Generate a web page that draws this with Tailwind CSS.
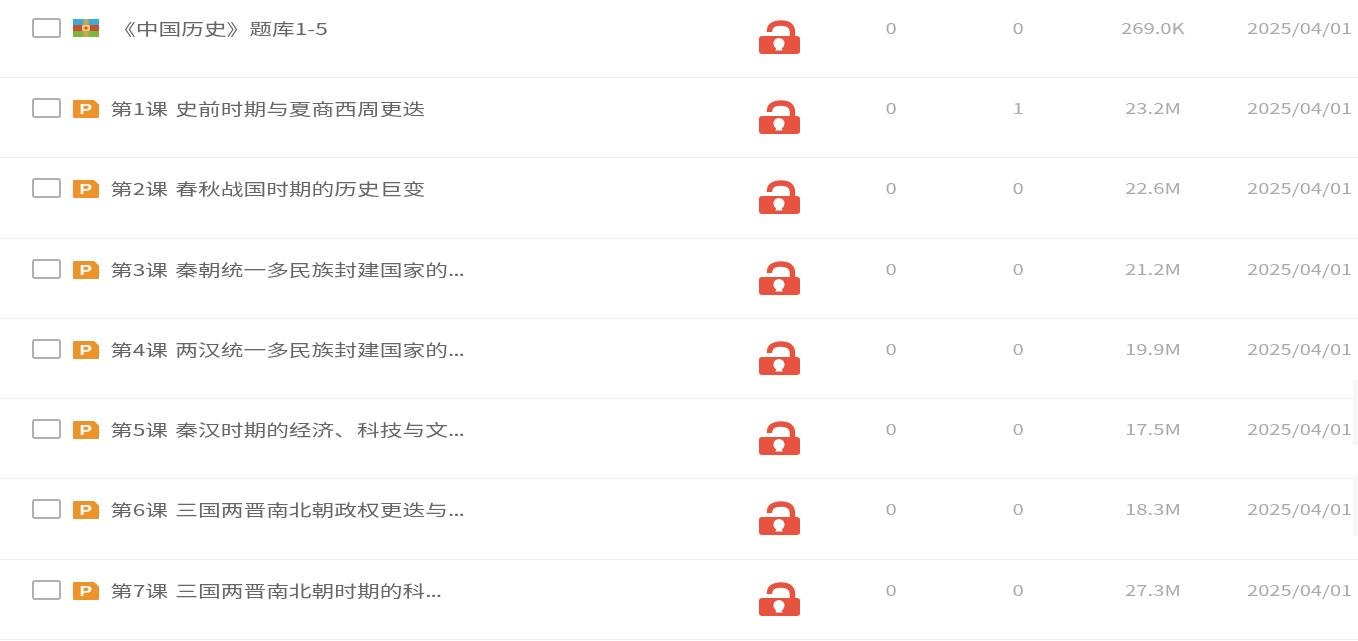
<!DOCTYPE html>
<html lang="zh-CN">
<head>
    <meta charset="UTF-8">
    <title>文件列表</title>
    <script src="https://cdn.jsdelivr.net/npm/@tailwindcss/browser@4"></script>
</head>
<body class="bg-white overflow-hidden h-[641px] relative font-['Noto_Sans_CJK_SC','Noto_Sans',sans-serif]">
    <div id="file-list" class="-mt-[2.25px] blur-[0.5px]"></div>

    <!-- 右侧露出的浮层边缘 -->
    <div class="absolute right-0 top-[380px] w-[5px] h-[65px] bg-[#f7f7f7]"></div>
    <div class="absolute right-0 top-[475px] w-[5px] h-[61px] bg-[#f7f7f7]"></div>

    <script>
        const files = [
            { name: "《中国历史》题库1-5", more: false, type: "rar", down: 0, view: 0, size: "269.0K" },
            { name: "第1课 史前时期与夏商西周更迭", more: false, type: "ppt", down: 0, view: 1, size: "23.2M" },
            { name: "第2课 春秋战国时期的历史巨变", more: false, type: "ppt", down: 0, view: 0, size: "22.6M" },
            { name: "第3课 秦朝统一多民族封建国家的", more: true, type: "ppt", down: 0, view: 0, size: "21.2M" },
            { name: "第4课 两汉统一多民族封建国家的", more: true, type: "ppt", down: 0, view: 0, size: "19.9M" },
            { name: "第5课 秦汉时期的经济、科技与文", more: true, type: "ppt", down: 0, view: 0, size: "17.5M" },
            { name: "第6课 三国两晋南北朝政权更迭与", more: true, type: "ppt", down: 0, view: 0, size: "18.3M" },
            { name: "第7课 三国两晋南北朝时期的科", more: true, type: "ppt", down: 0, view: 0, size: "27.3M" }
        ];

        const rarIcon = `<svg class="w-[26px] h-[18px] mt-[1px] ml-[12px] shrink-0" viewBox="0 0 26 18">
            <rect width="26" height="6" fill="#3fa9d8"/>
            <rect y="6" width="26" height="6" fill="#c8502c"/>
            <rect y="12" width="26" height="6" fill="#7cb63c"/>
            <rect x="10.5" width="5" height="18" fill="#c9a94f"/>
            <rect x="9" y="6" width="8" height="6" rx="1" fill="#f4c877"/>
            <circle cx="13" cy="9" r="1.6" fill="#c8502c"/>
        </svg>`;

        const pptIcon = `<svg class="w-[26px] h-[18px] mt-[2px] ml-[12px] shrink-0" viewBox="0 0 26 18">
            <path d="M1 0H21L26 4.5V17A1 1 0 0 1 25 18H1A1 1 0 0 1 0 17V1A1 1 0 0 1 1 0Z" fill="#ee9329"/>
            <text x="10.2" y="14.5" text-anchor="middle" transform="scale(1.25 1)" font-family="Liberation Sans" font-weight="700" font-size="15" fill="#fff">P</text>
        </svg>`;

        const lockIcon = `<svg class="w-[41px] h-[34px] mt-[2px] shrink-0" viewBox="0 0 41 34">
            <path d="M10.5 12V11C10.5 6 15 3 22 3S33.5 6 33.5 12V18" fill="none" stroke="#e8533f" stroke-width="5.5"/>
            <rect y="16" width="41" height="18" rx="3" fill="#e8533f"/>
            <circle cx="20" cy="23.5" r="5.5" fill="#fff"/>
            <path d="M18 25H22L23.5 30.5H16.5Z" fill="#fff"/>
        </svg>`;

        document.getElementById("file-list").innerHTML = files.map((file) => `
            <div class="flex items-start h-[80.25px] pt-[20px] pl-[32px] border-b border-[#ececec] text-[#aaaaaa] whitespace-nowrap">
                <span class="w-[29px] h-[20px] shrink-0 border-2 border-[#b0b0b0] rounded-[3px] bg-white"></span>
                ${file.type === "rar" ? rarIcon : pptIcon}
                <div class="w-[649px] ml-[11px] shrink-0 h-[22px] -mt-[1px] leading-[22px] ${file.type === "rar" ? "pl-[3px]" : "pl-0"}">
                    <span class="inline-block origin-left scale-x-[1.42] text-[16px] [word-spacing:1.5px] text-[#666666]">${file.name}${file.more ? '<span class="tracking-[-0.7px]">...</span>' : ""}</span>
                </div>
                ${lockIcon}
                <div class="w-[60px] ml-[61px] -mt-[1px] text-center h-[22px] leading-[22px] text-[14.5px]"><span class="inline-block scale-x-[1.4]">${file.down}</span></div>
                <div class="w-[60px] ml-[67px] -mt-[1px] text-center h-[22px] leading-[22px] text-[14.5px]"><span class="inline-block scale-x-[1.4]">${file.view}</span></div>
                <div class="w-[80px] ml-[65px] -mt-[1px] text-center h-[22px] leading-[22px] text-[14.5px]"><span class="inline-block scale-x-[1.4]">${file.size}</span></div>
                <div class="ml-[54px] -mt-[1px] h-[22px] leading-[22px] text-[14.5px]"><span class="inline-block origin-left scale-x-[1.39]">2025/04/01</span></div>
            </div>
        `).join("");
    </script>
</body>
</html>
